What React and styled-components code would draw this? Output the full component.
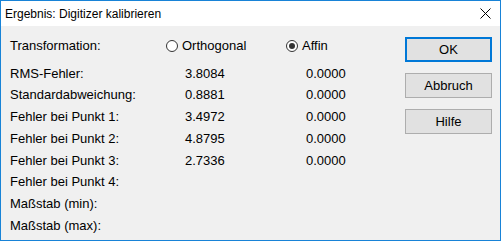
import styled, { createGlobalStyle } from "styled-components";

const GlobalStyle = createGlobalStyle`
  html, body {
    margin: 0;
    padding: 0;
    background: #f0f0f0;
  }
  * { box-sizing: border-box; }
`;

const rows = [
  ["RMS-Fehler:", "3.8084", "0.0000"],
  ["Standardabweichung:", "0.8881", "0.0000"],
  ["Fehler bei Punkt 1:", "3.4972", "0.0000"],
  ["Fehler bei Punkt 2:", "4.8795", "0.0000"],
  ["Fehler bei Punkt 3:", "2.7336", "0.0000"],
  ["Fehler bei Punkt 4:", "", ""],
  ["Maßstab (min):", "", ""],
  ["Maßstab (max):", "", ""],
];

function App() {
  return (
    <>
      <GlobalStyle />
      <Window>
        <TitleBar>
          <Title>Ergebnis: Digitizer kalibrieren</Title>
          <CloseIcon width="11" height="11" viewBox="0 0 11 11">
            <path d="M0.5 0.5 L10.5 10.5 M10.5 0.5 L0.5 10.5" stroke="#000" strokeWidth="1" />
          </CloseIcon>
        </TitleBar>
        <Content>
          <Table>
            <Label $head>Transformation:</Label>
            <RadioCell>
              <Radio />
              Orthogonal
            </RadioCell>
            <RadioCell>
              <Radio $checked />
              Affin
            </RadioCell>
            {rows.map(([label, a, b]) => (
              <Row key={label}>
                <Label>{label}</Label>
                <Value $indent={19}>{a}</Value>
                <Value $indent={20}>{b}</Value>
              </Row>
            ))}
          </Table>
          <Buttons>
            <Button $default>OK</Button>
            <Button>Abbruch</Button>
            <Button>Hilfe</Button>
          </Buttons>
        </Content>
      </Window>
    </>
  );
}

export default App;

const Window = styled.div`
  width: 501px;
  height: 241px;
  border: 1px solid #1883d7;
  background: #f0f0f0;
  display: flex;
  flex-direction: column;
  font-family: "Liberation Sans", Arial, sans-serif;
  font-size: 13px;
  color: #000;
`;

const TitleBar = styled.div`
  height: 25px;
  background: #fff;
  display: flex;
  align-items: center;
  padding-left: 4px;
  padding-right: 9px;
`;

const Title = styled.span`
  font-size: 12px;
  flex: 1;
`;

const CloseIcon = styled.svg`
  display: block;
  margin-top: -1px;
`;

const Content = styled.div`
  flex: 1;
  display: flex;
  padding-left: 9px;
  padding-right: 8px;
`;

const Table = styled.div`
  display: grid;
  grid-template-columns: 156px 120px 90px;
  grid-template-rows: 27.25px repeat(8, 21.75px);
  padding-top: 9px;
  align-content: start;
`;

const Row = styled.div`
  display: contents;
`;

const Label = styled.div`
  display: flex;
  align-items: center;
  white-space: nowrap;
  ${(p) => p.$head && "height: 21.75px; align-self: start;"}
`;

const Value = styled.div`
  display: flex;
  align-items: center;
  padding-left: ${(p) => p.$indent}px;
`;

const RadioCell = styled.div`
  display: flex;
  align-items: center;
  gap: 4px;
  white-space: nowrap;
  height: 21.75px;
  align-self: start;
`;

const Radio = styled.span`
  width: 12px;
  height: 12px;
  border-radius: 50%;
  border: 1px solid #333;
  background: #fff;
  position: relative;
  flex: none;
  margin-top: 1px;
  &::after {
    content: "";
    display: ${(p) => (p.$checked ? "block" : "none")};
    position: absolute;
    left: 2px;
    top: 2px;
    width: 6px;
    height: 6px;
    border-radius: 50%;
    background: #333;
  }
`;

const Buttons = styled.div`
  margin-left: auto;
  padding-top: 11px;
  display: flex;
  flex-direction: column;
  gap: 11px;
`;

const Button = styled.div`
  width: 87px;
  height: 25px;
  background: #e1e1e1;
  border: ${(p) => (p.$default ? "2px solid #0078d7" : "1px solid #adadad")};
  display: flex;
  align-items: center;
  justify-content: center;
`;
